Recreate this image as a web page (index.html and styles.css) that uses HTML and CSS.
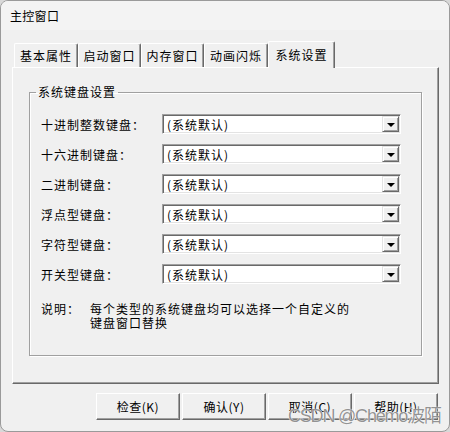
FILE: index.html
```html
<!DOCTYPE html>
<html lang="zh">
<head>
<meta charset="utf-8">
<title>主控窗口</title>
<link rel="stylesheet" href="styles.css">
</head>
<body>
<div class="window">
  <div class="titlebar">主控窗口</div>
  <div class="client">
    <div class="tabs">
      <div class="tab t1">基本属性</div>
      <div class="tab t2">启动窗口</div>
      <div class="tab t3">内存窗口</div>
      <div class="tab t4">动画闪烁</div>
      <div class="tab active">系统设置</div>
    </div>
    <div class="panel">
      <fieldset class="group">
        <legend class="legend">系统键盘设置</legend>
        <div class="rows">
          <div class="row"><span class="label">十进制整数键盘：</span><div class="combo"><span class="value">(系统默认)</span><span class="drop"><span class="arrow"></span></span></div></div>
          <div class="row"><span class="label">十六进制键盘：</span><div class="combo"><span class="value">(系统默认)</span><span class="drop"><span class="arrow"></span></span></div></div>
          <div class="row"><span class="label">二进制键盘：</span><div class="combo"><span class="value">(系统默认)</span><span class="drop"><span class="arrow"></span></span></div></div>
          <div class="row"><span class="label">浮点型键盘：</span><div class="combo"><span class="value">(系统默认)</span><span class="drop"><span class="arrow"></span></span></div></div>
          <div class="row"><span class="label">字符型键盘：</span><div class="combo"><span class="value">(系统默认)</span><span class="drop"><span class="arrow"></span></span></div></div>
          <div class="row"><span class="label">开关型键盘：</span><div class="combo"><span class="value">(系统默认)</span><span class="drop"><span class="arrow"></span></span></div></div>
        </div>
        <div class="note">
          <span class="note-label">说明：</span>
          <span class="note-text">每个类型的系统键盘均可以选择一个自定义的<br>键盘窗口替换</span>
        </div>
      </fieldset>
    </div>
    <div class="buttons">
      <div class="btn">检查(K)</div>
      <div class="btn">确认(Y)</div>
      <div class="btn">取消(C)</div>
      <div class="btn">帮助(H)</div>
    </div>
  </div>
  <div class="watermark">CSDN @Chemo波陌</div>
</div>
</body>
</html>
```
FILE: styles.css
```css
* { box-sizing: border-box; }
html, body { margin: 0; padding: 0; background: #d8d8d8; }
body {
  font-family: "Noto Sans CJK SC", "Liberation Sans", sans-serif;
  font-size: 12px;
  color: #000;
}
.window {
  position: relative;
  width: 450px;
  height: 432px;
  border: 1px solid #9a9a9a;
  border-radius: 8px;
  background: #f0f0f0;
  overflow: hidden;
}
.titlebar {
  height: 29px;
  line-height: 29px;
  padding-left: 9px;
  background: #f3f3f3;
  font-size: 12px;
  letter-spacing: 0.3px;
}
.client {
  padding: 11px 10px 0 11px;
}
.tabs {
  display: flex;
  align-items: flex-end;
  height: 26px;
  padding-left: 2px;
  position: relative;
  z-index: 1;
}
.tab {
  height: 24px;
  line-height: 23px;
  text-align: center;
  letter-spacing: 1px;
  border-top: 1px solid #fff;
  border-left: 1px solid #fff;
  border-right: 1px solid #696969;
  box-shadow: inset -1px 0 0 #a0a0a0;
  border-top-left-radius: 2px;
  border-top-right-radius: 2px;
}
.t1 { width: 64px; }
.t2 { width: 63px; }
.t3 { width: 63px; }
.t4 { width: 64px; }
.tab.active {
  width: 67px;
  height: 27px;
  line-height: 25px;
  margin-bottom: -1px;
  background: #f0f0f0;
}
.panel {
  width: 427px;
  height: 317px;
  border-top: 1px solid #fff;
  border-left: 1px solid #fff;
  border-right: 1px solid #696969;
  border-bottom: 1px solid #696969;
  box-shadow: inset -1px -1px 0 #a0a0a0;
  padding: 16px 0 0 16px;
}
.group {
  margin: 0;
  width: 393px;
  padding: 0 0 25px 11px;
  border: 1px solid #a0a0a0;
  box-shadow: inset 1px 1px 0 #fff, 1px 1px 0 #fff;
  min-width: 0;
}
.legend {
  margin-left: -5px;
  padding: 0 2px;
  line-height: 16px;
  letter-spacing: 1px;
}
.rows {
  display: flex;
  flex-direction: column;
  gap: 10px;
  margin-top: 14px;
}
.row {
  display: flex;
  align-items: center;
  height: 20px;
}
.label {
  width: 121px;
  letter-spacing: 1px;
}
.combo {
  display: flex;
  align-items: center;
  justify-content: space-between;
  width: 239px;
  height: 20px;
  background: #fff;
  border-top: 1px solid #a0a0a0;
  border-left: 1px solid #a0a0a0;
  border-right: 1px solid #fff;
  border-bottom: 1px solid #fff;
  box-shadow: inset 1px 1px 0 #696969, inset -1px -1px 0 #e3e3e3;
  padding: 0 1px 0 4px;
}
.value { letter-spacing: 1px; }
.drop {
  display: flex;
  align-items: center;
  justify-content: center;
  width: 17px;
  height: 16px;
  background: #f0f0f0;
  border-top: 1px solid #e3e3e3;
  border-left: 1px solid #e3e3e3;
  border-right: 1px solid #696969;
  border-bottom: 1px solid #696969;
  box-shadow: inset 1px 1px 0 #fff, inset -1px -1px 0 #a0a0a0;
}
.arrow {
  width: 0;
  height: 0;
  border-left: 4px solid transparent;
  border-right: 4px solid transparent;
  border-top: 4px solid #000;
  margin-top: 1px;
}
.note {
  display: flex;
  margin-top: 18px;
  line-height: 14px;
}
.note-label {
  width: 49px;
  letter-spacing: 1px;
}
.note-text {
  letter-spacing: 1px;
}
.buttons {
  display: flex;
  justify-content: flex-end;
  gap: 2px;
  margin-top: 9px;
  padding-right: 1px;
}
.btn {
  width: 84px;
  height: 27px;
  line-height: 25px;
  text-align: center;
  background: #f0f0f0;
  border-top: 1px solid #fff;
  border-left: 1px solid #fff;
  border-right: 1px solid #696969;
  border-bottom: 1px solid #696969;
  box-shadow: inset -1px -1px 0 #a0a0a0;
  letter-spacing: 0.5px;
}
.watermark {
  position: absolute;
  left: 287px;
  top: 400px;
  font-family: "Liberation Sans", "Noto Sans CJK SC", sans-serif;
  font-size: 18px;
  letter-spacing: -1.2px;
  color: rgba(105, 105, 105, 0.72);
  text-shadow: 0 0 1px rgba(255, 255, 255, 1), 0 0 1px rgba(255, 255, 255, 1);
  white-space: nowrap;
  pointer-events: none;
}
```
